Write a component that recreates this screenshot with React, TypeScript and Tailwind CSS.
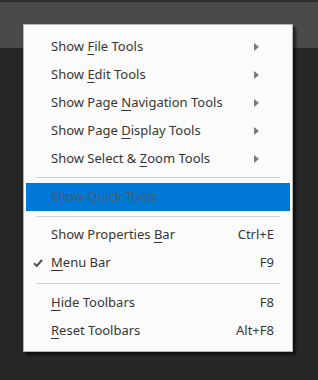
import type { ReactNode } from 'react'

type Item =
    | { kind: 'item'; label: ReactNode; shortcut?: string; submenu?: boolean; checked?: boolean; active?: boolean }
    | { kind: 'sep'; offset: string; height: string }

function U({ children }: { children: ReactNode }) {
    return <span className="underline underline-offset-[3px] decoration-1">{children}</span>
}

const items: Item[] = [
    { kind: 'item', label: <>Show <U>F</U>ile Tools</>, submenu: true },
    { kind: 'item', label: <>Show <U>E</U>dit Tools</>, submenu: true },
    { kind: 'item', label: <>Show Page <U>N</U>avigation Tools</>, submenu: true },
    { kind: 'item', label: <>Show Page <U>D</U>isplay Tools</>, submenu: true },
    { kind: 'item', label: <>Show Select &amp; <U>Z</U>oom Tools</>, submenu: true },
    { kind: 'sep', offset: 'pt-[4px]', height: 'h-[10px]' },
    { kind: 'item', label: <>Show Quick Tools</>, active: true },
    { kind: 'sep', offset: 'pt-[5px]', height: 'h-[10px]' },
    { kind: 'item', label: <>Show Properties <U>B</U>ar</>, shortcut: 'Ctrl+E' },
    { kind: 'item', label: <><U>M</U>enu Bar</>, shortcut: 'F9', checked: true },
    { kind: 'sep', offset: 'pt-[6px]', height: 'h-[12px]' },
    { kind: 'item', label: <><U>H</U>ide Toolbars</>, shortcut: 'F8' },
    { kind: 'item', label: <><U>R</U>eset Toolbars</>, shortcut: 'Alt+F8' },
]

function Arrow() {
    return (
        <svg width="5" height="8" viewBox="0 0 5 8" className="block">
            <path d="M0 0 L5 4 L0 8 Z" fill="#7a7a7a" />
        </svg>
    )
}

function Check() {
    return (
        <svg width="10" height="8" viewBox="0 0 10 8" className="block">
            <path d="M1 4.2 L3.8 7 L9 1" stroke="#505050" strokeWidth="2" fill="none" />
        </svg>
    )
}

export default function App() {
    return (
        <div className="relative w-[318px] h-[380px] overflow-hidden font-['Noto_Sans',sans-serif]">
            <div className="h-[2px] bg-[#2e2e2e]" />
            <div className="h-[46px] bg-[#4a4a4a]" />
            <div className="h-[332px] bg-[#262626]" />

            {/* Context menu */}
            <div className="absolute left-[23px] top-[24px] w-[270px] h-[328px] bg-[#fbfbfb] border border-[#b4b4b4] shadow-[3px_3px_2px_rgba(0,0,0,0.55)] pt-[8px]">
                {items.map((it, i) =>
                    it.kind === 'sep' ? (
                        <div key={i} className={`${it.height} ${it.offset} px-[12px]`}>
                            <div className="h-px bg-[#d2d2d2]" />
                        </div>
                    ) : (
                        <div
                            key={i}
                            className={`h-[28px] mx-[2px] flex items-center text-[13px] ${it.active ? 'bg-[#0078d7] text-[#40607e]' : 'text-[#363636]'}`}
                        >
                            <div className="w-[25px] flex justify-end pr-[8px]">{it.checked && <Check />}</div>
                            <div className="flex-1 whitespace-nowrap">{it.label}</div>
                            {it.submenu && <div className="mr-[31px]"><Arrow /></div>}
                            {it.shortcut && <div className="mr-[16px] whitespace-nowrap">{it.shortcut}</div>}
                        </div>
                    )
                )}
            </div>
        </div>
    )
}
